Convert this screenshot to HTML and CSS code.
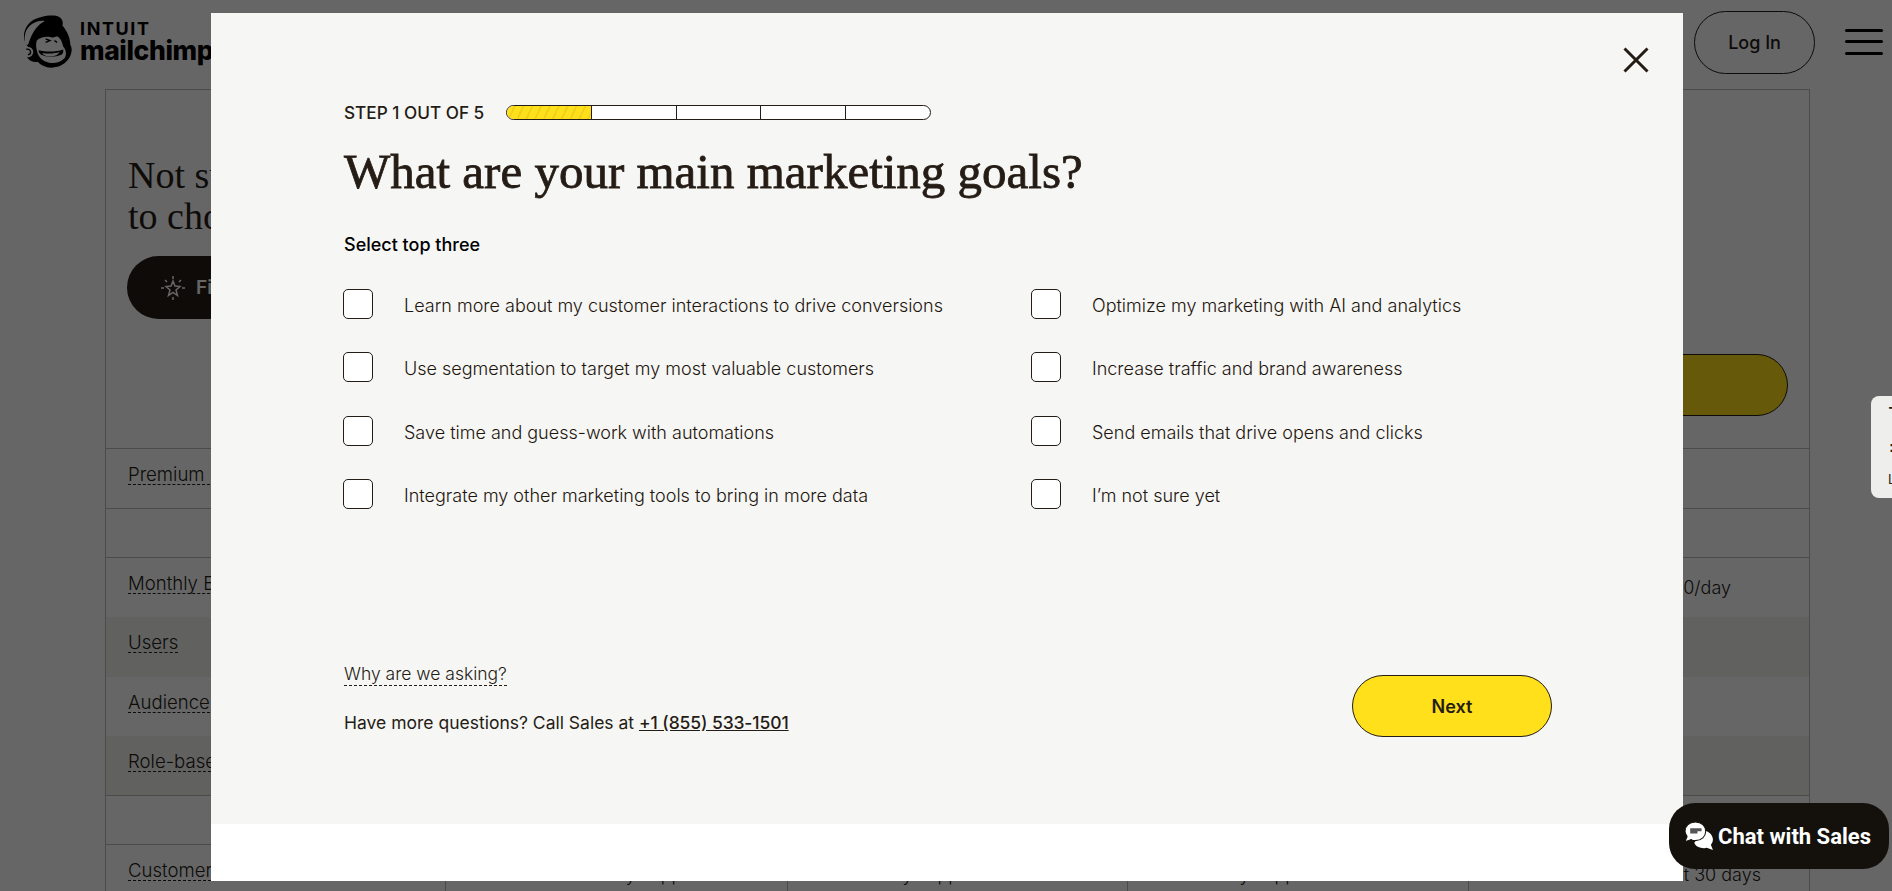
FILE: index.html
```html
<!DOCTYPE html>
<html lang="en">
<head>
<meta charset="utf-8">
<title>Mailchimp plans</title>
<link rel="stylesheet" href="styles.css">
</head>
<body>
<div class="page">
  <header class="site-header">
    <a class="logo">
      <svg class="logo-mark" viewBox="8 2 56 60" aria-hidden="true">
        <path class="ink" d="M19 9C28 3 44 1 50 4c4 2 5 6 4 10 5 6 9 14 9 22 2 3 2 8 0 12-3 7-10 12-17 13-8 2-15-1-20-6-4 1-9-1-12-5-2-4-2-9 1-12C8 30 9 17 19 9Z"/>
        <path class="skin" d="M12 35C10 26 12 17 20 12c5-3 10-4 14-3C27 12 20 20 15 36Z"/>
        <path class="skin" d="M25 31c4-4 10-5 15-4 3 1 5 0 8-1 4 2 6 7 7 12 3 3 4 8 2 12-4 5-11 7-18 6-7-1-13-7-14-14-1-4-1-8 0-11Z"/>
        <circle class="skin" cx="15" cy="44" r="6"/>
        <path class="line" d="M13 41c3-1 5 1 5 3s-1 3-3 3"/>
        <path class="ink" d="M27 42c8 2 20 2 28-1 0 3 0 4-2 6-7 3-17 3-23 0-2-1-3-3-3-5Z"/>
        <path class="skin" d="M31 45c6 1 14 1 20-1-2 3-5 5-10 5s-8-1-10-4Z"/>
        <path class="line" d="M35 29l5 2-5 2M45 31l3 2"/>
      </svg>
      <span class="logo-text">
        <span class="logo-intuit">INTUIT</span>
        <span class="logo-name">mailchimp</span>
      </span>
    </a>
    <a class="login">Log In</a>
    <div class="burger"><span></span><span></span><span></span></div>
  </header>

  <main class="plans">
    <section class="hero">
      <div class="hero-copy">
        <h2 class="hero-title">Not sure which plan is right for you? Let us help<br>to choose the best plan</h2>
        <a class="finder">
          <svg class="finder-icon" viewBox="0 0 26 26" aria-hidden="true">
            <path d="M13 6l2 5 5 .5-4 3.500 1.500 5.500-4.500-3-4.500 3 1.500-5.500-4-3.500 5-.5Z"/>
            <path d="M13 1v3M13 22v3M1 13h3M22 13h3M5 5l2 2M21 5l-2 2"/>
          </svg>
          <span>Find my plan</span>
        </a>
      </div>
      <a class="hero-cta">Buy Now</a>
    </section>
    <div class="row"><span class="term">Premium Features</span></div>
    <div class="row row-blank"></div>
    <div class="row"><span class="term">Monthly Email Sends</span><span class="val val-day">500/day</span></div>
    <div class="row row-alt"><span class="term">Users</span></div>
    <div class="row"><span class="term">Audience</span></div>
    <div class="row row-alt"><span class="term">Role-based Access</span></div>
    <div class="row row-blank"></div>
    <div class="row row-cols">
      <div class="cell"><span class="term">Customer Support</span></div>
      <div class="cell cell-mid"><span class="sup sup-a">Monthly support</span></div>
      <div class="cell cell-mid"><span class="sup sup-b">Any support</span></div>
      <div class="cell cell-mid"><span class="sup sup-c">Priority support</span></div>
      <div class="cell cell-end"><span class="val">First 30 days</span></div>
    </div>
  </main>

  <div class="overlay"></div>

  <aside class="side-tab">
    <span class="tab-a">T</span>
    <span class="tab-b">=</span>
    <span class="tab-c">L</span>
  </aside>

  <div class="modal" role="dialog" aria-modal="true">
    <svg class="close" viewBox="0 0 26 26" aria-label="Close"><path d="M1.500 1.500l23 23M24.500 1.500l-23 23"/></svg>
    <div class="modal-body">
      <div class="progress-line">
        <span class="step">STEP 1 OUT OF 5</span>
        <div class="progress">
          <span class="seg seg-on"></span><span class="seg"></span><span class="seg"></span><span class="seg"></span><span class="seg"></span>
        </div>
      </div>
      <h1 class="title">What are your main marketing goals?</h1>
      <p class="hint">Select top three</p>
      <div class="options">
        <label class="option"><span class="box"></span><span>Learn more about my customer interactions to drive conversions</span></label>
        <label class="option"><span class="box"></span><span>Optimize my marketing with AI and analytics</span></label>
        <label class="option"><span class="box"></span><span>Use segmentation to target my most valuable customers</span></label>
        <label class="option"><span class="box"></span><span>Increase traffic and brand awareness</span></label>
        <label class="option"><span class="box"></span><span>Save time and guess-work with automations</span></label>
        <label class="option"><span class="box"></span><span>Send emails that drive opens and clicks</span></label>
        <label class="option"><span class="box"></span><span>Integrate my other marketing tools to bring in more data</span></label>
        <label class="option"><span class="box"></span><span>I’m not sure yet</span></label>
      </div>
      <div class="modal-foot">
        <div class="foot-copy">
          <a class="why">Why are we asking?</a>
          <p class="call">Have more questions? Call Sales at <a class="phone">+1 (855) 533-1501</a></p>
        </div>
        <a class="next">Next</a>
      </div>
    </div>
    <div class="modal-strip"></div>
  </div>

  <a class="chat">
    <svg class="chat-icon" viewBox="0 0 30 30" aria-hidden="true">
      <path class="chat-back" d="M17 9c6 0 11 4 11 9 0 2-1 4-2 5l2 5-6-2c-5 1-11-1-12-5Z"/>
      <path class="chat-front" d="M11 1c6 0 10 4 10 9s-4 9-10 9c-1 0-3 0-4-1l-6 2 2-5c-1-2-2-3-2-5C1 5 5 1 11 1Z"/>
      <path class="chat-mark" d="M6 7h11v3H13v2H6Z"/>
    </svg>
    <span>Chat with Sales</span>
  </a>
</div>
</body>
</html>
```
FILE: styles.css
```css
* { box-sizing: border-box; }
html, body { margin: 0; padding: 0; height: 100%; }
body { font-family: "Inter", "Liberation Sans", sans-serif; color: #241c15; background: #fff; }
p, h1, h2 { margin: 0; font-weight: 400; }

.page { position: relative; width: 1892px; height: 891px; overflow: hidden; background: #fff; }

/* header */
.site-header { display: flex; align-items: center; height: 89px; padding: 10px 9px 16px 21px; }
.logo { display: flex; align-items: center; gap: 8px; }
.logo-mark { width: 51px; height: 53px; }
.ink { fill: #000; }
.skin { fill: #fff; }
.line { fill: none; stroke: #000; stroke-width: 1.500; }
.logo-text { display: flex; flex-direction: column; color: #000; padding-bottom: 2px; }
.logo-intuit { font-size: 18px; line-height: 19px; font-weight: 700; letter-spacing: 1.600px; }
.logo-name { font-size: 26.500px; line-height: 24px; font-weight: 800; letter-spacing: -.4px; }
.login { margin-left: auto; margin-top: 1px; width: 121px; height: 63px; display: flex; align-items: center; justify-content: center; border: 1.500px solid #241c15; border-radius: 32px; font-size: 18px; font-weight: 500; }
.burger { display: flex; flex-direction: column; gap: 8.500px; width: 38px; margin-left: 30px; }
.burger span { display: block; height: 3px; border-radius: 2px; background: #000; }

/* plan table */
.plans { margin-left: 105px; width: 1705px; border: 1px solid #bbb; border-bottom: 0; height: 802px; }
.hero { display: flex; justify-content: space-between; height: 359px; border-bottom: 1px solid #bbb; padding: 0 21px 32px 22px; }
.hero-copy { padding-top: 65px; }
.hero-title { font-family: "Liberation Serif", serif; font-size: 38px; line-height: 41px; }
.finder { margin: 19px 0 0 -1px; display: inline-flex; align-items: center; gap: 10px; height: 63px; padding: 0 33px; border-radius: 32px; background: #241c15; color: #fff; font-size: 19px; font-weight: 600; }
.finder-icon { width: 26px; height: 26px; fill: none; stroke: #fff; stroke-width: 1.500; }
.hero-cta { align-self: flex-end; width: 320px; height: 62px; display: flex; align-items: center; justify-content: center; background: #ffe01b; border: 1.500px solid #241c15; border-radius: 31px; font-weight: 500; font-size: 18px; }
.row { display: flex; align-items: center; justify-content: space-between; height: 59.500px; padding: 0 48px 0 22px; font-size: 18.600px; font-weight: 300; }
.row-blank { height: 49px; }
.row:nth-child(2), .row:nth-child(3), .row:nth-child(7), .row-blank { border-bottom: 1px solid #bbb; }
.row-alt { background: #f2f2f0; }
.term { border-bottom: 1px dashed #241c15; line-height: 20px; margin-bottom: 8px; white-space: nowrap; }
.val { font-size: 18px; }
.val-day { margin-right: 30px; }
.row-cols { display: grid; grid-template-columns: 339px 342px 340px 341px 1fr; padding: 0; height: 60px; align-items: stretch; }
.cell { display: flex; align-items: center; padding: 0 22px; }
.cell-mid, .cell-end { border-left: 1px solid #bbb; }
.cell-end { justify-content: flex-end; padding-right: 48px; }
.sup { white-space: nowrap; font-size: 18px; }
.sup-a { margin-left: 100px; }
.sup-b { margin-left: 70px; }
.sup-c { margin-left: 40px; }

.overlay { position: absolute; inset: 0; background: rgba(0, 0, 0, .6); }

/* side tab */
.side-tab { position: absolute; left: 1871px; top: 396px; width: 60px; height: 102px; background: #eeeeec; border-radius: 8px 0 0 8px; display: flex; flex-direction: column; padding: 8px 0 0 17px; color: #241c15; line-height: 1; }
.tab-a { font-size: 22px; height: 31px; }
.tab-b { font-size: 24px; height: 30px; font-weight: 500; }
.tab-c { font-size: 13px; margin-top: 8px; }

/* modal */
.modal { position: absolute; left: 211px; top: 13px; width: 1472px; height: 868px; display: flex; flex-direction: column; background: #fff; }
.close { position: absolute; left: 1412px; top: 34px; width: 26px; height: 26px; fill: none; stroke: #241c15; stroke-width: 3; }
.modal-body { height: 811px; background: #f6f6f4; padding: 92px 131px 0 132px; }
.modal-strip { flex: 1; }
.progress-line { display: flex; align-items: center; height: 14px; padding-left: 1px; }
.step { width: 162px; font-size: 17.200px; font-weight: 500; white-space: nowrap; }
.progress { display: flex; width: 425px; height: 15px; border: 1px solid #241c15; border-radius: 8px; overflow: hidden; background: #fff; }
.seg { flex: 1; border-left: 1px solid #241c15; }
.seg:first-child { border-left: 0; }
.seg-on { background: repeating-linear-gradient(115deg, #ffe01b 0 6px, #f0d21b 6px 8px); }
.title { margin-top: 23px; padding-left: 1px; font-family: "Liberation Serif", serif; font-size: 49px; line-height: 60px; font-weight: 400; -webkit-text-stroke: .8px #241c15; white-space: nowrap; }
.hint { margin-top: 30.500px; padding-left: 1px; font-size: 18px; line-height: 24px; font-weight: 500; color: #000; }
.options { margin-top: 32.500px; display: grid; grid-template-columns: 688px 1fr; grid-auto-rows: 63.300px; height: 253px; font-size: 18px; font-weight: 350; color: #1d150e; }
.option { display: flex; align-items: flex-start; gap: 31px; }
.option span:last-child { padding-top: 5px; line-height: 24px; white-space: nowrap; }
.box { flex: none; width: 30px; height: 30px; background: #fff; border: 1px solid #241c15; border-radius: 5px; }
.modal-foot { margin-top: 120px; display: flex; justify-content: space-between; align-items: flex-start; }
.foot-copy { padding: 1px 0 0 1px; font-size: 17.500px; font-weight: 300; }
.why { display: inline-block; line-height: 22px; border-bottom: 1px dashed #241c15; }
.call { margin-top: 25px; line-height: 24px; }
.phone { font-weight: 500; letter-spacing: -.1px; text-decoration: underline; }
.next { width: 200px; height: 62px; margin-top: 13px; display: flex; align-items: center; justify-content: center; background: #ffe01b; border: 1.500px solid #241c15; border-radius: 31px; font-size: 18px; font-weight: 600; }

/* chat */
.chat { position: absolute; left: 1669px; top: 803px; width: 220px; height: 66px; display: flex; align-items: center; gap: 3px; padding-left: 15px; border-radius: 26px; background: #14110d; color: #fff; font-family: "Roboto", "Liberation Sans", sans-serif; font-size: 22px; font-weight: 700; white-space: nowrap; }
.chat-icon { width: 31px; height: 31px; }
.chat-back, .chat-front { fill: #fff; }
.chat-front { stroke: #14110d; stroke-width: 1; }
.chat-mark { fill: #555; }
```
